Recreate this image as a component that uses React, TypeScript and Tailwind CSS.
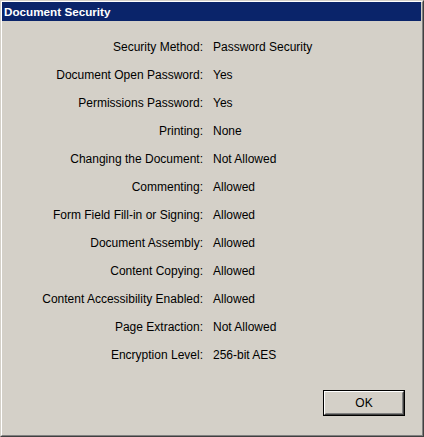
import React from "react";

const rows: [string, string][] = [
  ["Security Method:", "Password Security"],
  ["Document Open Password:", "Yes"],
  ["Permissions Password:", "Yes"],
  ["Printing:", "None"],
  ["Changing the Document:", "Not Allowed"],
  ["Commenting:", "Allowed"],
  ["Form Field Fill-in or Signing:", "Allowed"],
  ["Document Assembly:", "Allowed"],
  ["Content Copying:", "Allowed"],
  ["Content Accessibility Enabled:", "Allowed"],
  ["Page Extraction:", "Not Allowed"],
  ["Encryption Level:", "256-bit AES"],
];

export default function App() {
  return (
    <div
      className="w-[424px] h-[437px] bg-[#d4d0c8] border border-l-[#d4d0c8] border-t-[#d4d0c8] border-r-[#404040] border-b-[#404040] text-black"
      style={{ fontFamily: '"Liberation Sans", Arial, sans-serif' }}
    >
      <div className="h-full flex flex-col border border-l-white border-t-white border-r-[#808080] border-b-[#808080]">
        <div className="h-[19px] mr-[1px] bg-[#0a246a] flex items-center pl-[2px] text-white font-bold text-[11.7px] leading-none">
          Document Security
        </div>
        <div className="pt-[12px] grid grid-cols-[201px_1fr] gap-x-[10px] text-[12px]">
          {rows.map(([k, v]) => (
            <React.Fragment key={k}>
              <div className="h-[28px] flex items-center justify-end whitespace-nowrap">{k}</div>
              <div className="h-[28px] flex items-center whitespace-nowrap">{v}</div>
            </React.Fragment>
          ))}
        </div>
        <div className="flex-1 flex items-end justify-end pr-[17px] pb-[19px]">
          <button className="w-[82px] h-[26px] border border-black bg-[#d4d0c8] p-0">
            <div className="w-full h-full border border-l-white border-t-white border-r-[#404040] border-b-[#404040]">
              <div className="w-full h-full flex items-center justify-center border border-transparent border-r-[#808080] border-b-[#808080] text-[12px]">
                OK
              </div>
            </div>
          </button>
        </div>
      </div>
    </div>
  );
}
